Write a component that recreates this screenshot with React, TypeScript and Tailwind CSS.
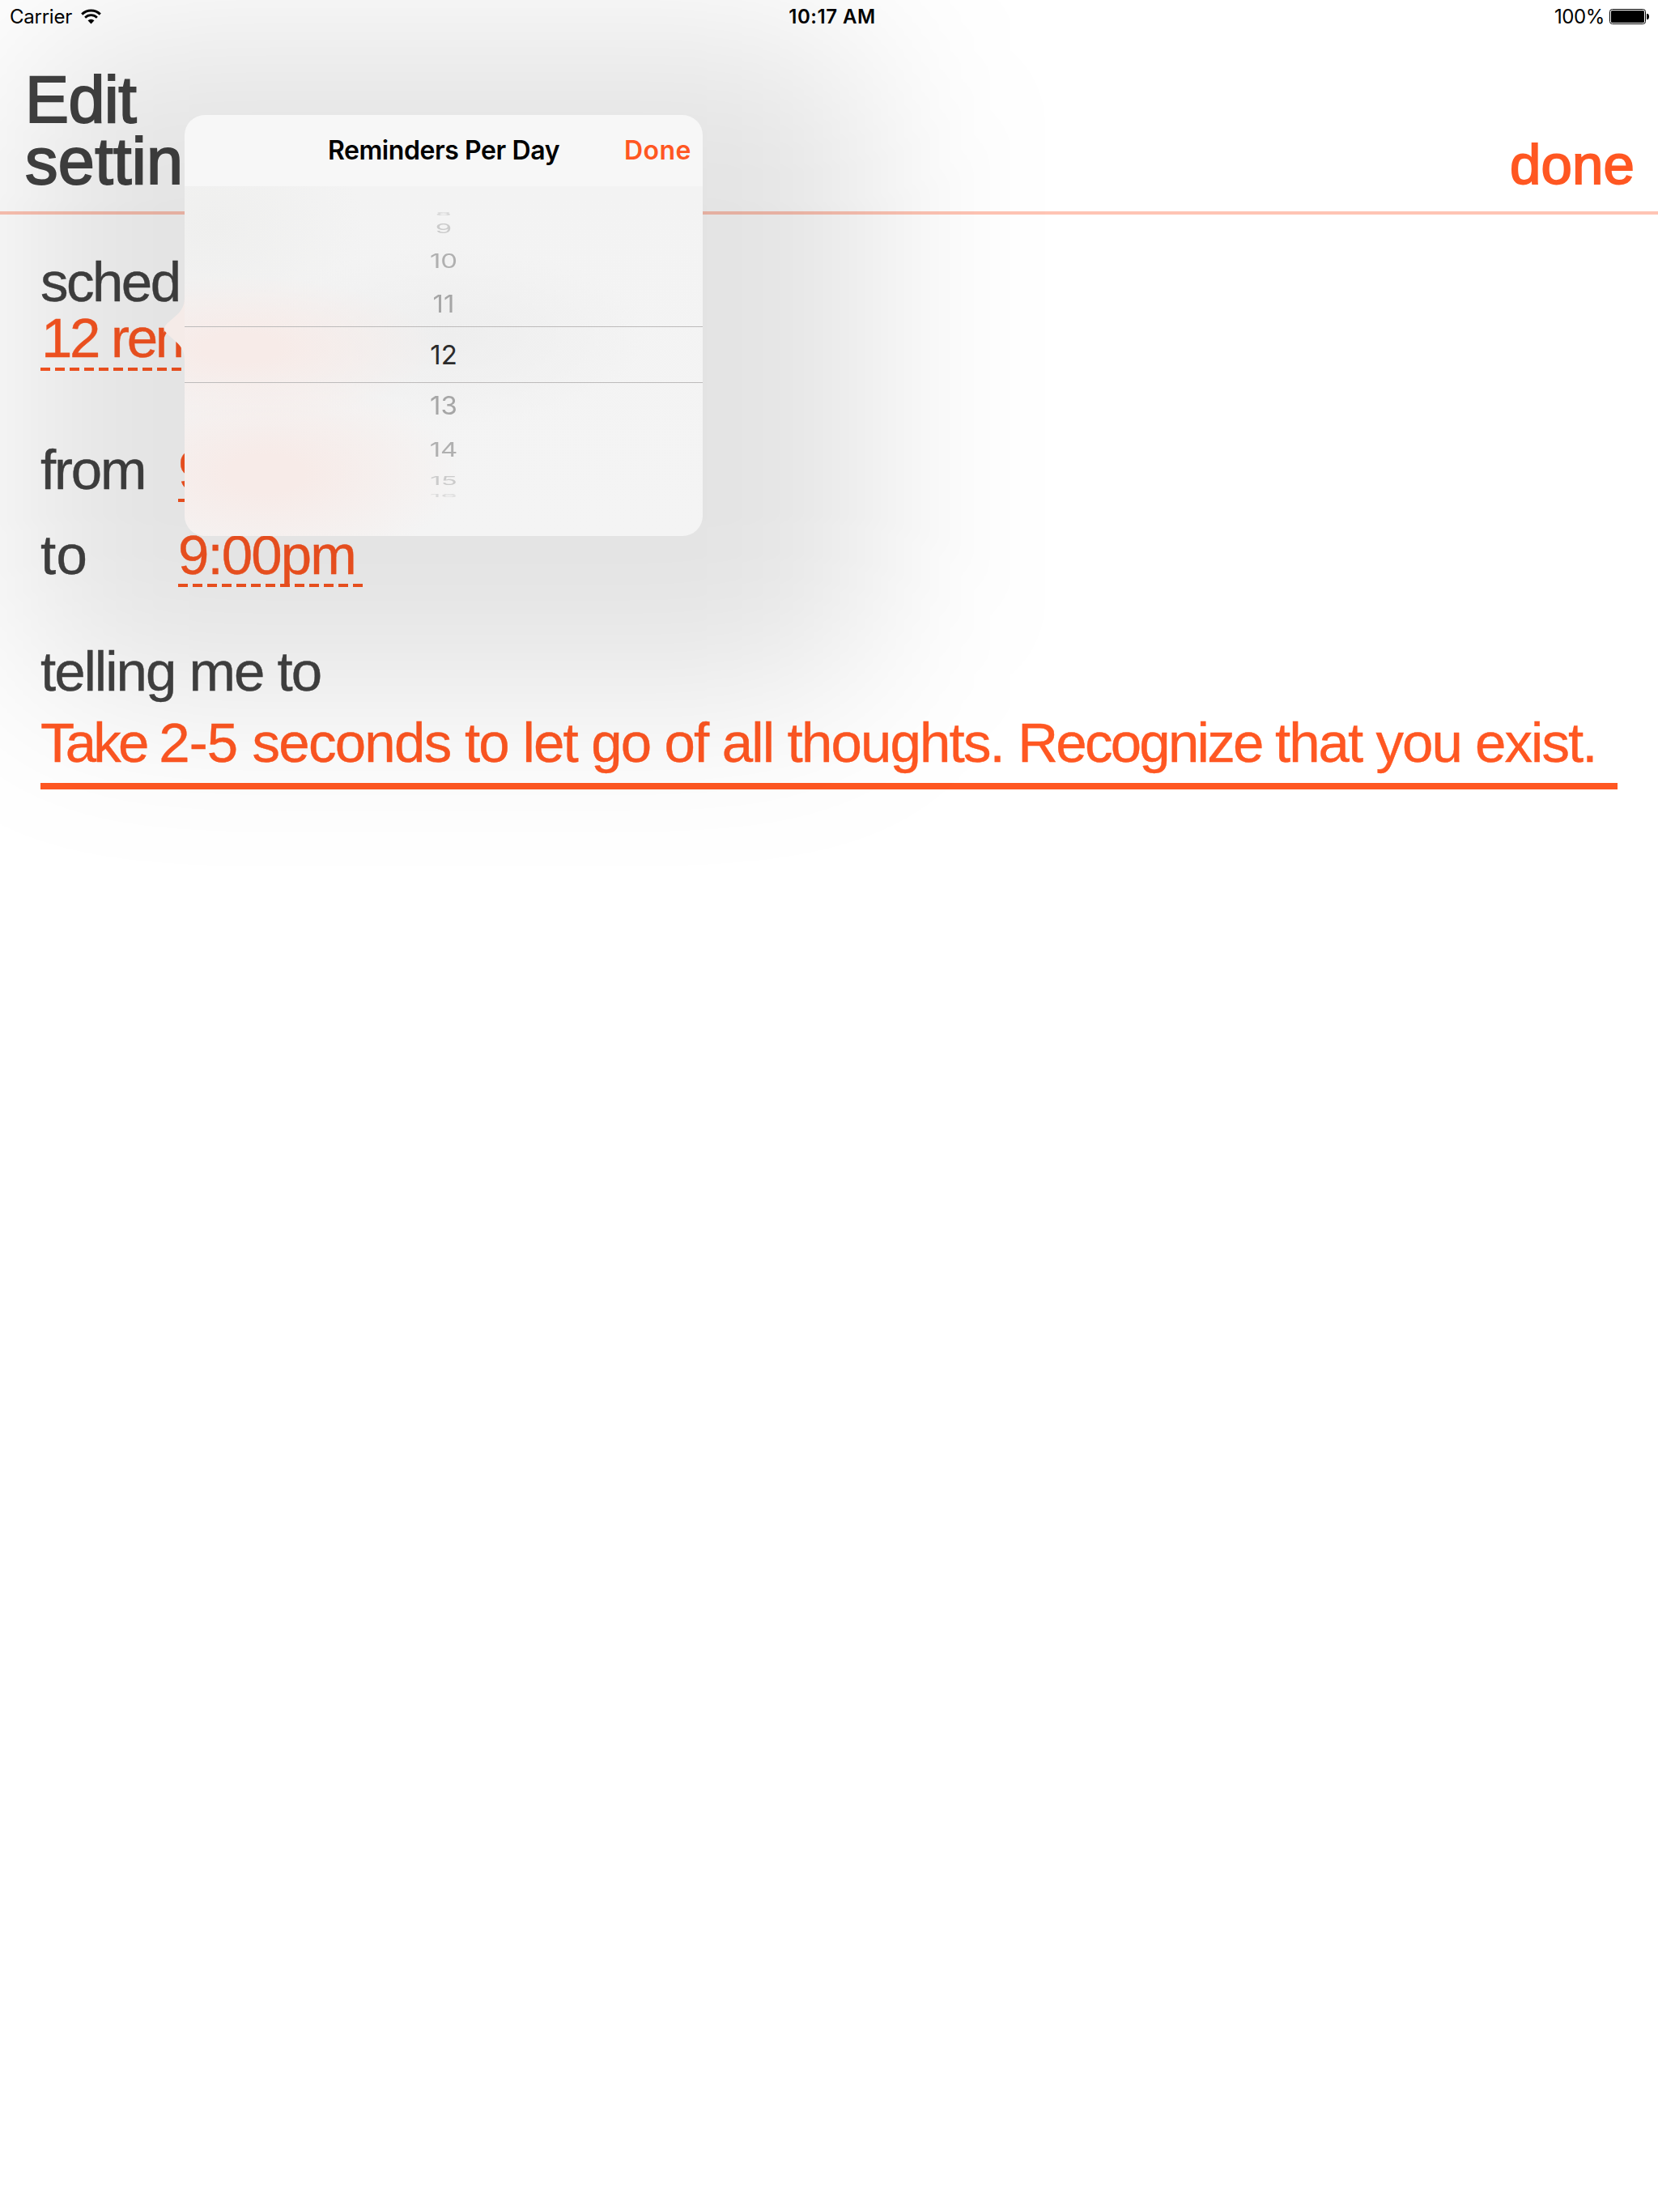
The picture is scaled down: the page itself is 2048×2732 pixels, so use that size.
import React from "react";

const dashes =
  "h-[4px] bg-[repeating-linear-gradient(90deg,#ff5722_0,#ff5722_12px,transparent_12px,transparent_18px)]";

function WifiIcon() {
  return (
    <svg className="h-[19px] w-[25px]" viewBox="0 0 25 19" fill="none">
      <path d="M1.2 6.6A16 16 0 0 1 23.8 6.6" stroke="#000" strokeWidth="2.9" />
      <path d="M5.1 10.7A10.6 10.6 0 0 1 19.9 10.7" stroke="#000" strokeWidth="2.7" />
      <path d="M8.5 14.3A5.8 5.8 0 0 1 16.5 14.3L12.5 18.4Z" fill="#000" />
    </svg>
  );
}

function BatteryIcon() {
  return (
    <svg className="h-[19px] w-[49px]" viewBox="0 0 49 19" fill="none">
      <rect x="0.5" y="0.5" width="44" height="18" rx="3" fill="#fff" stroke="#000" />
      <rect x="2" y="2" width="41" height="15" rx="1.6" fill="#000" />
      <path d="M46 6h1.2c1 0 1.8 1.6 1.8 3.5S48.200 13 47.200 13H46z" fill="#000" />
    </svg>
  );
}

function StatusBar() {
  return (
    <div className="grid h-10 grid-cols-3 pt-px font-['Inter'] text-[24px] leading-10 text-black">
      <div className="flex pl-3">
        <span className="tracking-[-0.25px]">Carrier</span>
        <div className="ml-[11px] mt-[10px]">
          <WifiIcon />
        </div>
      </div>
      <div className="pl-[8px] text-center font-semibold tracking-[0.5px]">10:17 AM</div>
      <div className="flex justify-end pr-[11px]">
        <span className="tracking-[-0.4px]">100%</span>
        <div className="ml-[6px] mt-[10px]">
          <BatteryIcon />
        </div>
      </div>
    </div>
  );
}

function Header() {
  return (
    <div className="flex h-[225px] items-end justify-between border-b-4 border-[#ffc4b4]">
      <h1 className="mb-[24px] ml-[31px] w-[300px] text-[81px] leading-[76px] text-[#424242] [-webkit-text-stroke:2px_#424242]">
        <span className="block tracking-[-0.6px]">Edit</span>
        <span className="block tracking-[0.3px]">settings</span>
      </h1>
      <button className="mb-[19px] mr-[29px] text-[69px] leading-[77px] tracking-[0.1px] text-[#ff5722] [-webkit-text-stroke:1.8px_#ff5722]">
        done
      </button>
    </div>
  );
}

function TimeRow({ label, value, labelClass }: { label: string; value: string; labelClass: string }) {
  return (
    <div className="flex h-[105px]">
      <div className={"w-[170px] " + labelClass}>{label}</div>
      <div className="w-[228px] text-[#ff5722]">
        <div className="tracking-[-1.9px]">{value}</div>
        <div className={"mt-px " + dashes} />
      </div>
    </div>
  );
}

function Settings() {
  return (
    <div className="whitespace-nowrap px-[50px] pt-[49px] text-[69px] leading-[69px] text-[#424242] [-webkit-text-stroke:0.4px]">
      <div className="tracking-[-2.5px]">
        sched<span className="ml-1">ule</span>
      </div>
      <div className="w-[372px] text-[#ff5722]">
        <div className="ml-px tracking-[-3.3px]">12 reminders</div>
        <div className={"mt-[2px] " + dashes} />
      </div>
      <div className="mt-[88px]">
        <TimeRow label="from" value="9:00am" labelClass="tracking-[-2.2px]" />
        <TimeRow label="to" value="9:00pm" labelClass="tracking-[0.4px]" />
      </div>
      <div className="mt-[39px] tracking-[-2px]">telling me to</div>
      <div className="mt-[19px] border-b-8 border-[#ff5722] pb-[15px] text-[#ff5722]">
        <span className="tracking-[-3.75px]">Take </span>
        <span className="tracking-[-0.9px]">2-5 </span>
        <span className="tracking-[-1.72px]">seconds to </span>
        <span className="tracking-[-1.84px]">let go of all thoughts. </span>
        <span className="tracking-[-2.75px]">Recognize </span>
        <span className="tracking-[-1.95px]">that you exist.</span>
      </div>
    </div>
  );
}

function Picker() {
  return (
    <div className="flex h-[432px] flex-col bg-[radial-gradient(ellipse_240px_90px_at_70px_200px,#f7ebe8_20%,#f7ebe800),radial-gradient(ellipse_240px_120px_at_100px_355px,#f7ebe8_20%,#f7ebe800),radial-gradient(ellipse_240px_110px_at_330px_185px,#eeeeee,#eeeeee00),radial-gradient(ellipse_180px_140px_at_40px_50px,#efefee,#efefee00),linear-gradient(#f3f3f3,#f4f4f4)] pt-[31px] text-center font-['Inter'] text-[33px] leading-[40px]">
      <div className="flex h-[5px] items-center justify-center text-[#d6d6d6]">
        <span className="scale-y-[0.15]">8</span>
      </div>
      <div className="flex h-[31px] items-center justify-center text-[#cbcbcb]">
        <span className="scale-y-[0.46]">9</span>
      </div>
      <div className="flex h-[49px] items-center justify-center text-[#b0b0b0]">
        <span className="scale-y-[0.73]">10</span>
      </div>
      <div className="flex h-[57px] items-center justify-center pt-px text-[#a6a6a6]">
        <span className="scale-y-[0.92]">11</span>
      </div>
      <div className="flex h-[70px] items-center justify-center border-y border-[#bdbbbb] text-[#2b2b2b]">
        <span>12</span>
      </div>
      <div className="flex h-[55px] items-center justify-center text-[#a6a6a6]">
        <span className="scale-y-[0.93]">13</span>
      </div>
      <div className="flex h-[54px] items-center justify-center text-[#b0b0b0]">
        <span className="scale-y-[0.75]">14</span>
      </div>
      <div className="flex h-[23px] items-center justify-center text-[#cbcbcb]">
        <span className="scale-y-[0.45]">15</span>
      </div>
      <div className="mt-[5px] flex h-[4px] items-center justify-center text-[#dadada]">
        <span className="scale-y-[0.15]">16</span>
      </div>
    </div>
  );
}

function Popover() {
  return (
    <div className="absolute left-[228px] top-[142px] h-[520px] w-[640px]">
      <div className="absolute -bottom-[200px] -left-[205px] -right-[215px] -top-[108px] rounded-[120px] bg-black/[0.11] blur-[108px]" />
      <svg className="absolute -left-[26px] top-[226px] h-[76px] w-[27px]" viewBox="0 0 27 76">
        <path d="M27 0H26C26 12 20 18 13 24L4 32Q-2 38 4 44L13 52C20 58 26 64 26 76H27Z" fill="#f5ebe8" />
      </svg>
      <div className="relative overflow-hidden rounded-[25px]">
        <div className="grid h-[88px] grid-cols-[1fr_auto_1fr] items-start bg-[#f7f7f7] pt-[24px] font-['Inter'] text-[32px] font-semibold leading-[40px]">
          <span />
          <span className="tracking-[-0.42px] text-black">Reminders Per Day</span>
          <button className="justify-self-end pr-[14px] tracking-[0.5px] text-[#ff5722]">Done</button>
        </div>
        <Picker />
      </div>
    </div>
  );
}

export default function App() {
  return (
    <div className="relative h-[2732px] w-[2048px] overflow-hidden bg-white font-['Liberation_Sans']">
      <StatusBar />
      <Header />
      <Settings />
      <Popover />
    </div>
  );
}
